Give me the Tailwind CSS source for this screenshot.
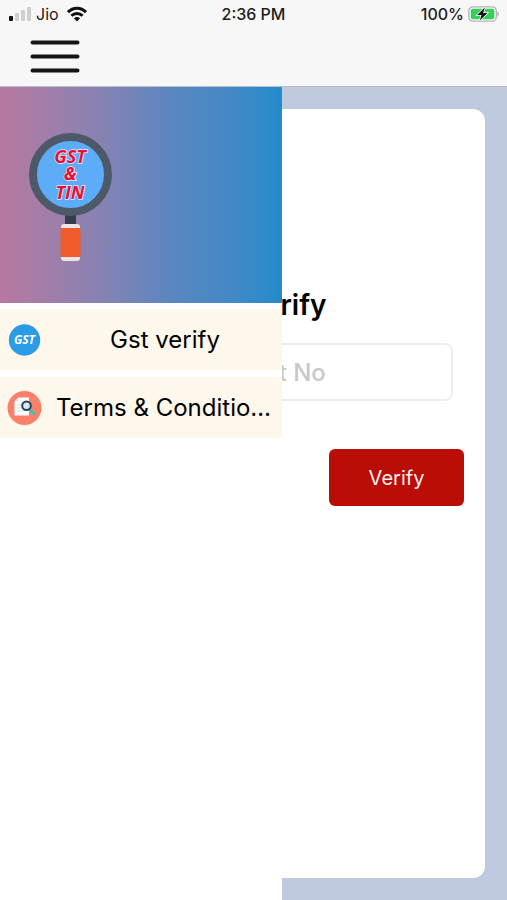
<!DOCTYPE html>
<html lang="en">
<head>
<meta charset="utf-8">
<meta name="viewport" content="width=device-width, initial-scale=1">
<title>Gst verify</title>
<script src="https://cdn.jsdelivr.net/npm/@tailwindcss/browser@4"></script>
</head>
<body class="flex min-h-screen flex-col bg-[#bec8de] font-['Inter','Liberation_Sans',sans-serif] text-black">
  <header class="border-b border-[#b9bfcb] bg-[#f7f7f7]">
    <div class="grid h-7 grid-cols-3 items-center px-2 text-base text-[#1c1c1c]">
      <div class="flex items-center gap-1">
        <svg class="h-4 w-6" viewBox="0 0 24 16" aria-hidden="true">
          <rect x="1" y="10" width="4" height="5" rx="1" fill="#111"/>
          <rect x="7" y="7" width="4" height="8" rx="1" fill="#cfcfcf"/>
          <rect x="13" y="4" width="4" height="11" rx="1" fill="#cfcfcf"/>
          <rect x="19" y="1" width="4" height="14" rx="1" fill="#cfcfcf"/>
        </svg>
        <span>Jio</span>
        <svg class="ml-1 h-4 w-5" viewBox="0 0 20 16" fill="none" stroke="#111" stroke-width="3" aria-hidden="true">
          <path d="M1 6.2C6 .9 14 .9 19 6.2"/>
          <path d="M4.4 9.8c3.2-3.2 8-3.2 11.2 0"/>
          <path d="M10 15.4 6.9 12.3c1.8-1.7 4.4-1.7 6.2 0z" fill="#111" stroke="none"/>
        </svg>
      </div>
      <span class="text-center font-medium">2:36 PM</span>
      <div class="flex items-center justify-end gap-1 font-medium">
        <span>100%</span>
        <svg class="h-4 w-[31px]" viewBox="0 0 31 16" aria-label="Battery charging">
          <rect x=".8" y=".8" width="27.500" height="14.400" rx="4" fill="#f7f7f7" stroke="#b4b4b4" stroke-width="1.300"/>
          <rect x="2.800" y="2.800" width="23.500" height="10.400" rx="2" fill="#35cf5b"/>
          <path d="M29.400 5.500c1.800.6 1.800 4.400 0 5z" fill="#a9a9a9"/>
          <path d="M16.800 1.500 9.200 9h4.300L11.800 14.500l7.600-7.500h-4.300z" fill="#111" stroke="#f7f7f7" stroke-width="1.600" paint-order="stroke"/>
        </svg>
      </div>
    </div>
    <div class="px-7 pt-2 pb-2">
      <button type="button" aria-label="Menu" class="block">
        <svg class="h-[42px] w-[54px]" viewBox="0 0 54 42" stroke="#151515" stroke-width="4" stroke-linecap="round" aria-hidden="true">
          <path d="M4.500 6.500h45M4.500 20.500h45M4.500 34.500h45"/>
        </svg>
      </button>
    </div>
  </header>

  <main class="relative flex flex-1 flex-col px-[22px] pt-[22px] pb-[22px]">
    <form class="flex flex-1 flex-col rounded-xl bg-white px-8 pt-[174px]">
      <h1 class="py-1 text-center text-[28px] leading-9 font-semibold">GST Verify</h1>
      <input type="text" aria-label="Enter Gst No" placeholder="Enter Gst No" class="mt-4 h-[58px] w-full rounded-lg border-2 border-[#ededef] bg-white text-center text-2xl font-medium placeholder:text-[#c8c8ca]">
      <button type="button" class="-mr-[11px] mt-12 h-[57px] w-[135px] self-end rounded-md bg-[#b90d05] text-xl text-[#fdf1f0]">Verify</button>
    </form>

    <aside class="absolute inset-y-0 left-0 w-[282px] bg-white">
      <div class="bg-linear-to-r from-[#b878a0] via-[#5b86bf] via-60% to-[#218bcb] px-7 pt-[45px] pb-10">
        <svg class="h-[131px] w-[84px]" viewBox="0 0 84 131" role="img" aria-label="GST &amp; TIN">
          <rect x="37" y="80" width="11" height="14" fill="#343d4b"/>
          <circle cx="42.500" cy="42.500" r="37.500" fill="#5cacf8" stroke="#4d5969" stroke-width="8"/>
          <rect x="33" y="92" width="19" height="37" rx="3" fill="#ece3e3"/>
          <rect x="32.500" y="96" width="20" height="29" rx="1" fill="#f15a2b"/>
          <g font-family="Open Sans, sans-serif" font-size="18" font-weight="700" font-style="italic" text-anchor="middle" fill="#e60f35" stroke="#f8e3f2" stroke-width="1.600" paint-order="stroke">
            <text x="42" y="31">GST</text>
            <text x="42" y="48">&amp;</text>
            <text x="42" y="67">TIN</text>
          </g>
        </svg>
      </div>
      <nav class="mt-1.5 flex flex-col gap-[7px] text-2xl">
        <a href="#" class="flex h-[61px] items-center bg-[#fef7eb] pr-2 pl-[7px]">
          <svg class="h-[34px] w-[35px] shrink-0" viewBox="0 0 35 34" aria-hidden="true">
            <circle cx="17.500" cy="17" r="15.700" fill="#2b9be6"/>
            <text x="17.500" y="20.500" font-family="Open Sans, sans-serif" font-size="12" font-weight="700" font-style="italic" text-anchor="middle" fill="#fff">GST</text>
          </svg>
          <span class="ml-3.5 min-w-0 flex-1 truncate text-center">Gst verify</span>
        </a>
        <a href="#" class="flex h-[61px] items-center bg-[#fef7eb] pr-2 pl-[7px]">
          <svg class="h-[34px] w-[35px] shrink-0" viewBox="0 0 35 34" aria-hidden="true">
            <circle cx="17.500" cy="17" r="17" fill="#fa8069"/>
            <path d="M11.500 6.500h10.500v18H7.500v-14z" fill="#fff"/>
            <path d="M7.500 10.500h4v-4z" fill="#d9e5ea"/>
            <path d="M10 14h5M10 17h4.500M10 20h7" stroke="#c5e0ea" stroke-width="1.200"/>
            <path d="m22.500 18.500 5.500 5" stroke="#4bbfa6" stroke-width="3.200"/>
            <circle cx="19.500" cy="14.800" r="4.300" fill="#d3ebf5" stroke="#2d3e52" stroke-width="2"/>
          </svg>
          <span class="ml-3.5 min-w-0 flex-1 truncate text-center">Terms &amp; Conditions</span>
        </a>
      </nav>
    </aside>
  </main>
</body>
</html>
